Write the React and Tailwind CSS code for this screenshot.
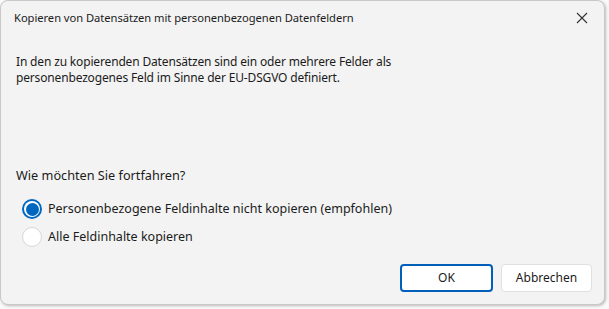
export default function App() {
  const font = { fontFamily: '"Segoe UI", "Noto Sans", "Open Sans", sans-serif' };
  return (
    <div className="w-[609px] h-[309px] bg-[#fafafa] overflow-hidden" style={font}>
      <div className="w-[605px] h-[305px] rounded-lg border border-[#c8c8c8] bg-[#f3f3f3] shadow-[1px_1px_3px_rgba(0,0,0,0.25)] flex flex-col text-[12px] text-[#1b1b1b]">
        <div className="h-[34px] flex items-center justify-between pl-[13px] pr-[15px]">
          <span className="leading-none text-[11.2px] tracking-[-0.05px]">Kopieren von Datensätzen mit personenbezogenen Datenfeldern</span>
          <svg width="12" height="12" viewBox="0 0 12 12" className="mr-[1px]">
            <path d="M1 1 L11 11 M11 1 L1 11" stroke="#333" strokeWidth="1.1" fill="none" />
          </svg>
        </div>
        <div className="pl-[15px] pt-[19px] leading-[16px] tracking-[-0.16px]">
          <p>In den zu kopierenden Datensätzen sind ein oder mehrere Felder als</p>
          <p>personenbezogenes Feld im Sinne der EU-DSGVO definiert.</p>
        </div>
        <div className="pl-[15px] mt-[81px] leading-[16px] text-[12.7px]">Wie möchten Sie fortfahren?</div>
        <div className="pl-[21px] mt-[16px] flex flex-col gap-[8px] text-[12.5px]">
          <label className="flex items-center gap-[6px]">
            <span className="w-[20px] h-[20px] rounded-full bg-[#0067c0] flex items-center justify-center">
              <span className="w-[16px] h-[16px] rounded-full bg-white flex items-center justify-center">
                <span className="w-[13px] h-[13px] rounded-full bg-[#0067c0]" />
              </span>
            </span>
            <span>Personenbezogene Feldinhalte nicht kopieren (empfohlen)</span>
          </label>
          <label className="flex items-center gap-[6px]">
            <span className="w-[20px] h-[20px] rounded-full bg-white border border-[#d6d6d6]" />
            <span>Alle Feldinhalte kopieren</span>
          </label>
        </div>
        <div className="flex justify-end gap-[8px] pr-[12px] mt-auto mb-[12px]">
          <button className="w-[93px] h-[28px] rounded-[4px] border-2 border-[#005fb8] bg-white text-[12px] text-[#1b1b1b]">OK</button>
          <button className="w-[91px] h-[28px] rounded-[4px] border border-[#e0e0e0] bg-white text-[12px] text-[#1b1b1b]">Abbrechen</button>
        </div>
      </div>
    </div>
  );
}
